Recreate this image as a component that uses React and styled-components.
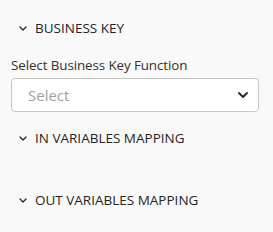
import React from "react";
import styled, { createGlobalStyle } from "styled-components";

const Global = createGlobalStyle`
  html, body { margin: 0; padding: 0; background: #f9f9fa; }
  body { font-family: "Open Sans", "Noto Sans", sans-serif; color: #323130; }
`;

const Panel = styled.div`
  width: 273px;
  height: 232px;
  padding: 12px 14px 0 11px;
  box-sizing: border-box;
  display: flex;
  flex-direction: column;
  background: #f9f9fa;
`;

const Header = styled.div`
  height: 32px;
  display: flex;
  align-items: center;
  gap: 8px;
  padding-left: 8px;
  font-size: 13.5px;
  color: #252423;
  letter-spacing: 0px;
`;

const Body = styled.div`
  display: flex;
  flex-direction: column;
  gap: 4px;
  padding-top: ${(p) => p.$pt || 0}px;
  padding-bottom: ${(p) => p.$pb || 0}px;
  min-height: ${(p) => p.$min || 0}px;
`;

const Label = styled.div`
  font-size: 13.4px;
  line-height: 18px;
  color: #323130;
  letter-spacing: -0.1px;
`;

const SelectBox = styled.div`
  height: 34px;
  box-sizing: border-box;
  border: 1px solid #c8c6c4;
  border-radius: 4px;
  background: #ffffff;
  display: flex;
  align-items: center;
  justify-content: space-between;
  padding: 0 10px 0 16px;
`;

const Placeholder = styled.span`
  font-size: 15px;
  color: #a19f9d;
`;

const Chevron = ({ w = 6, h = 3, sw = 1.3 }) => (
  <svg width={w + 2} height={h + 2} viewBox={`0 0 ${w + 2} ${h + 2}`} style={{ display: "block" }}>
    <path d={`M1 1 L${(w + 2) / 2} ${h + 1} L${w + 1} 1`} fill="none" stroke="#252423" strokeWidth={sw} strokeLinecap="round" strokeLinejoin="round" />
  </svg>
);

export default function App() {
  return (
    <>
      <Global />
      <Panel>
        <Header>
          <Chevron />
          <span>BUSINESS KEY</span>
        </Header>
        <Body $pt={12} $pb={10}>
          <Label>Select Business Key Function</Label>
          <SelectBox>
            <Placeholder>Select</Placeholder>
            <Chevron w={8} h={4} sw={1.8} />
          </SelectBox>
        </Body>
        <Header>
          <Chevron />
          <span>IN VARIABLES MAPPING</span>
        </Header>
        <Body $min={30} />
        <Header>
          <Chevron />
          <span>OUT VARIABLES MAPPING</span>
        </Header>
      </Panel>
    </>
  );
}
